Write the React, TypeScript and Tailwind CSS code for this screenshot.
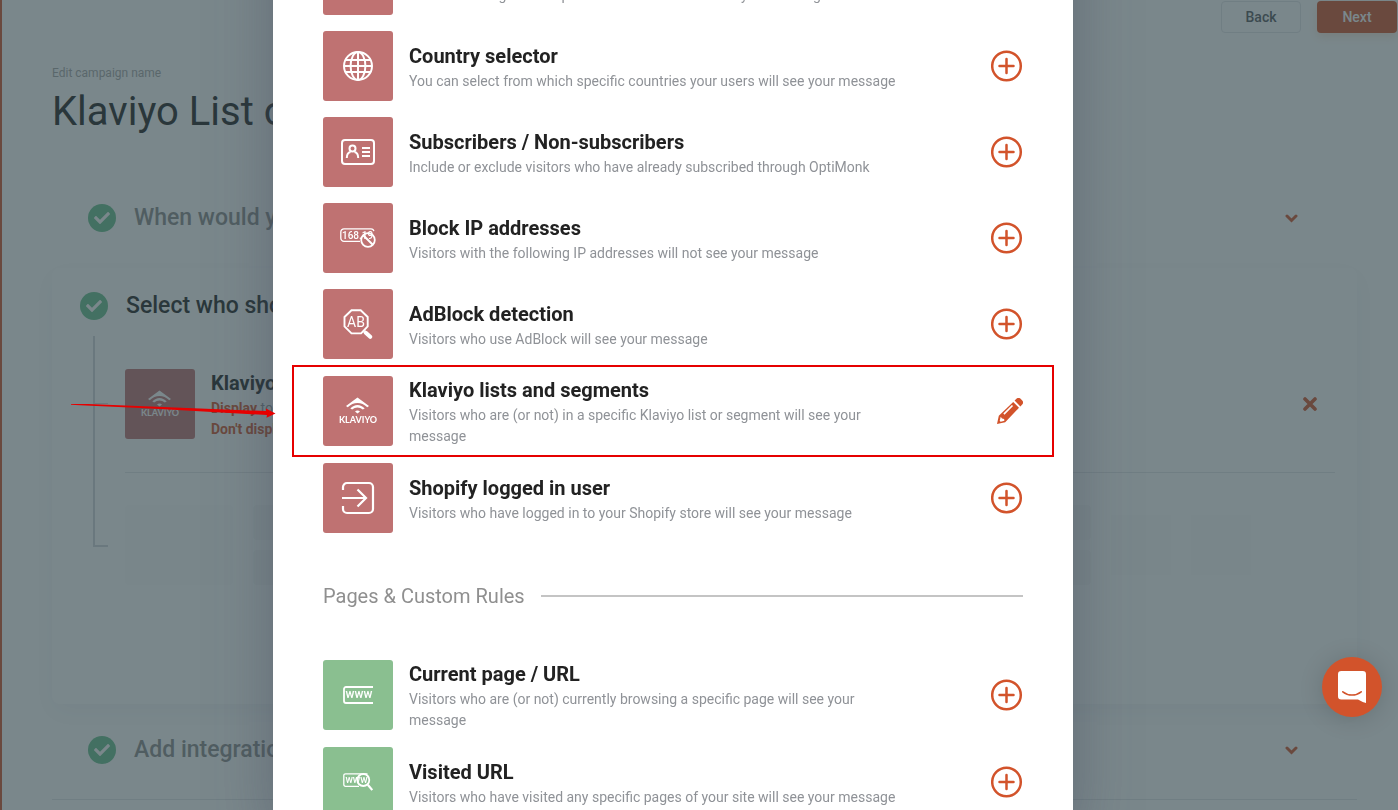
import React from 'react';
import { FaCheck } from 'react-icons/fa';

interface Rule {
  title: string;
  description: string;
  icon: React.ReactNode;
  active?: boolean;
}

const GlobeIcon = () => (
  <svg width="30" height="30" viewBox="0 0 30 30" fill="none" stroke="currentColor" strokeWidth="2">
    <circle cx="15" cy="15" r="14" />
    <ellipse cx="15" cy="15" rx="7.4" ry="14" />
    <path d="M15 1v28M2.4 9h25.2M1.2 15h27.6M2.4 21h25.2" />
  </svg>
);

const IdCardIcon = () => (
  <svg width="34" height="26" viewBox="0 0 34 26" fill="none" stroke="currentColor" strokeWidth="2">
    <rect x="1" y="1" width="32" height="24" rx="3" />
    <circle cx="11.5" cy="9.6" r="3" />
    <path d="M5.8 19c0-3.8 2-5.6 3.7-6M17.2 19c0-3.8-2-5.6-3.7-6" />
    <path d="M21 9h8M21 13h8M21 17h8" />
  </svg>
);

const BlockIpIcon = () => (
  <svg width="36" height="22" viewBox="0 0 36 22" fill="none" stroke="currentColor" strokeWidth="1.3">
    <path d="M20 14.3H4A3.2 3.2 0 0 1 .8 11V5A3.2 3.2 0 0 1 4 1.8h27c1.6 0 2.6.8 2.9 2.4" />
    <text x="2" y="11.6" fontSize="10" fontFamily="Roboto, sans-serif" fontWeight="500" fill="currentColor" stroke="none">168.19</text>
    <circle cx="28" cy="13" r="6.8" strokeWidth="1.8" />
    <path d="m23.2 8.2 9.6 9.6" strokeWidth="2" />
  </svg>
);

const AdBlockIcon = () => (
  <svg width="30" height="30" viewBox="0 0 30 30" fill="none" stroke="currentColor" strokeWidth="1.9">
    <path d="M8.5 1.2h9.2l7 6.8v9.4l-6.6 7H8.5L1.5 17.4V8z" />
    <text x="13" y="18" textAnchor="middle" fontSize="14" fontFamily="Roboto, sans-serif" fontWeight="400" fill="currentColor" stroke="none">AB</text>
    <path d="m21.3 22.3 1.2 1.2" strokeWidth="3" />
    <path d="m22.8 23.8 4.4 4" strokeWidth="4" strokeLinecap="round" />
  </svg>
);

const KlaviyoIcon = () => (
  <svg width="38" height="28" viewBox="0 0 38 28" fill="currentColor">
    <path d="M7 9 18.5.6 30 9l-1.7 1.3C22.5 4.6 14.5 4.6 8.7 10.3z" />
    <path d="M11.3 11.4c4.2-4.7 10.200-4.700 14.400 0l-1.900 1.200c-3.200-2.700-7.400-2.700-10.600 0z" />
    <path d="M16 14.600c1.500-1.400 3.500-1.400 5 0l-2.500 1.900z" />
    <text x="19" y="26" textAnchor="middle" fontSize="9" fontFamily="Lato, sans-serif" fontWeight="700">KLAVIYO</text>
  </svg>
);

const LoginIcon = () => (
  <svg width="34" height="34" viewBox="0 0 34 34" fill="none" stroke="currentColor" strokeWidth="2.2">
    <path d="M2 9V6a4 4 0 0 1 4-4h22a4 4 0 0 1 4 4v22a4 4 0 0 1-4 4H6a4 4 0 0 1-4-4v-3" />
    <path d="M1 17h24M16.5 8.500 25 17l-8.500 8.500" />
  </svg>
);

const WwwIcon = () => (
  <svg width="30" height="18" viewBox="0 0 30 18" fill="none" stroke="currentColor" strokeWidth="1.8">
    <path d="M30 1H3a2 2 0 0 0-2 2v12a2 2 0 0 0 2 2h27" />
    <text x="2.6" y="12.4" fontSize="12" fontFamily="Roboto, sans-serif" fontWeight="500" fill="currentColor" stroke="none">www</text>
  </svg>
);

const WwwSearchIcon = () => (
  <svg width="30" height="18" viewBox="0 0 30 18" fill="none" stroke="currentColor" strokeWidth="1.3">
    <path d="M16 13.3H2.5A1.7 1.7 0 0 1 .8 11.6V2.500A1.700 1.700 0 0 1 2.500.8h22" />
    <text x="2.4" y="10.2" fontSize="10" fontFamily="Roboto, sans-serif" fontWeight="500" fill="currentColor" stroke="none">www</text>
    <circle cx="20.3" cy="7" r="6" strokeWidth="1.8" />
    <path d="m24.8 11.8 4.5 5.2" strokeWidth="2.2" />
  </svg>
);

const PlusCircleIcon = () => (
  <svg width="32" height="32" viewBox="0 0 32 32" fill="none" stroke="currentColor" strokeWidth="2.5">
    <circle cx="15.5" cy="16" r="14.3" />
    <path d="M15.5 9v14M8.5 16h14" strokeLinecap="round" />
  </svg>
);

const PencilIcon = () => (
  <svg width="26" height="26" viewBox="0 0 26 26" fill="currentColor">
    <path d="M17.6 2.6 19.2 1a3.3 3.3 0 0 1 4.6 0l1.2 1.2a3.3 3.3 0 0 1 0 4.6l-1.6 1.6z" />
    <path fillRule="evenodd" d="m16.2 4 5.800 5.800L8.200 24.200 0 26l1.800-8.200zm-1.300 2.900L6.300 15.500l1.200 1.200 8.600-8.600zM3.700 18.800l-1 4.100 1 .9 3.700-1-.3-1.900-2.100-.3z" />
  </svg>
);

const ChevronIcon = () => (
  <svg width="13" height="9" viewBox="0 0 13 9" fill="none" stroke="currentColor" strokeWidth="3" strokeLinecap="round">
    <path d="m2 2 4.500 4.500L11 2" />
  </svg>
);

const CrossIcon = () => (
  <svg width="14" height="14" viewBox="0 0 14 14" fill="none" stroke="currentColor" strokeWidth="3.6" strokeLinecap="round">
    <path d="m2 2 10 10M12 2 2 12" />
  </svg>
);

const ChatIcon = () => (
  <svg width="28" height="32" viewBox="0 0 28 32">
    <path fill="#fff" d="M3.3 0h21.4A3.3 3.3 0 0 1 28 3.300V32s-4.100-1-8-3.500H3.300A3.300 3.300 0 0 1 0 25.200V3.300A3.300 3.300 0 0 1 3.300 0z" />
    <path d="M4.800 20.800c5.500 4.300 12.900 4.300 18.400 0" fill="none" stroke="#d2532b" strokeWidth="1.6" strokeLinecap="round" />
  </svg>
);

const visitorRules: Rule[] = [
  { title: 'Source', description: 'Visitors coming from a specific traffic source will see your message', icon: null },
  { title: 'Country selector', description: 'You can select from which specific countries your users will see your message', icon: <GlobeIcon /> },
  { title: 'Subscribers / Non-subscribers', description: 'Include or exclude visitors who have already subscribed through OptiMonk', icon: <IdCardIcon /> },
  { title: 'Block IP addresses', description: 'Visitors with the following IP addresses will not see your message', icon: <BlockIpIcon /> },
  { title: 'AdBlock detection', description: 'Visitors who use AdBlock will see your message', icon: <AdBlockIcon /> },
  { title: 'Klaviyo lists and segments', description: 'Visitors who are (or not) in a specific Klaviyo list or segment will see your message', icon: <KlaviyoIcon />, active: true },
  { title: 'Shopify logged in user', description: 'Visitors who have logged in to your Shopify store will see your message', icon: <LoginIcon /> },
];

const pageRules: Rule[] = [
  { title: 'Current page / URL', description: 'Visitors who are (or not) currently browsing a specific page will see your message', icon: <WwwIcon /> },
  { title: 'Visited URL', description: 'Visitors who have visited any specific pages of your site will see your message', icon: <WwwSearchIcon /> },
];

const Highlight = () => (
  <>
    <div className="pointer-events-none absolute -inset-x-[31px] -inset-y-[10px] border-2 border-[#e60000]" />
    <svg className="pointer-events-none absolute top-6 -left-[252px]" width="205" height="20" viewBox="0 0 205 20" fill="#e60000">
      <path d="M0 4.900h17l178 7.200V9.500l9.500 4.900-9 4.400.5-2.800L80 9.600 9 6.300 0 5.800z" />
    </svg>
  </>
);

const RuleRow: React.FC<{ rule: Rule; color: string }> = ({ rule, color }) => (
  <li className="relative flex items-center">
    <div className={`flex h-[70px] w-[70px] shrink-0 items-center justify-center rounded-[3px] text-white ${color}`}>
      {rule.icon}
    </div>
    <div className="ml-4 max-w-[490px] flex-1">
      <h3 className="text-xl leading-[30px] font-bold text-[#222]">{rule.title}</h3>
      <p className="text-sm leading-[21px] text-[#8f9297]">{rule.description}</p>
    </div>
    <button type="button" aria-label={`${rule.active ? 'Edit' : 'Add'} ${rule.title}`} className="ml-auto text-[#d2532b]">
      {rule.active ? <PencilIcon /> : <PlusCircleIcon />}
    </button>
    {rule.active && <Highlight />}
  </li>
);

const RulesModal = () => (
  <div className="fixed inset-0 flex justify-center overflow-hidden bg-[rgba(47,67,73,0.64)] pr-[52px]">
    <div role="dialog" aria-label="Targeting rules" className="-mt-[79px] h-fit w-[800px] max-w-full bg-white px-[50px] py-6 shadow-[0_0_60px_rgba(60,66,84,0.4)]">
      <ul className="flex flex-col gap-4">
        {visitorRules.map(rule => (
          <RuleRow key={rule.title} rule={rule} color="bg-[#bf7272]" />
        ))}
      </ul>
      <div className="my-[51px] flex items-center gap-4">
        <h2 className="text-xl leading-6 text-[#8f8f8f]">Pages &amp; Custom Rules</h2>
        <div className="h-0.5 flex-1 bg-[#c4c4c4]" />
      </div>
      <ul className="flex flex-col gap-4">
        {pageRules.map(rule => (
          <RuleRow key={rule.title} rule={rule} color="bg-[#8abf90]" />
        ))}
      </ul>
    </div>
  </div>
);

const CheckBadge = () => (
  <span className="flex h-7 w-7 shrink-0 items-center justify-center rounded-full bg-[#67bf8d] text-white">
    <FaCheck className="h-4 w-4" />
  </span>
);

const CollapsedStep: React.FC<{ title: string }> = ({ title }) => (
  <button type="button" className="flex w-full items-center pr-[59px] pl-9 text-left">
    <CheckBadge />
    <span className="ml-[18px] text-[23px] font-medium text-[#8c8c8c]">{title}</span>
    <span className="ml-auto text-[#d2532b]">
      <ChevronIcon />
    </span>
  </button>
);

const CampaignPage = () => (
  <div className="min-h-screen border-l-2 border-[#d2532b] bg-white pt-px">
    <div className="flex justify-end gap-4 pr-px text-sm font-medium">
      <button type="button" className="h-8 w-20 rounded border border-[#e3e5e8] text-[#55585c]">Back</button>
      <button type="button" className="h-8 w-20 rounded bg-[#d2532b] text-white shadow-[0_4px_10px_rgba(210,120,60,0.2)]">Next</button>
    </div>

    <main className="mt-8 pr-[41px] pl-[50px]">
      <p className="text-xs leading-4 text-[#a6a6a6]">Edit campaign name</p>
      <h1 className="mt-[7px] text-[40px] leading-[48px] text-[#222]">Klaviyo List or Segment</h1>

      <div className="mt-8 flex h-[100px]">
        <CollapsedStep title="When would you like the popup to appear?" />
      </div>

      <section className="rounded-lg pt-6 pr-[22px] pb-[119px] pl-[41px] shadow-[0_8px_24px_rgba(30,50,80,0.06)]">
        <div className="-ml-[13px] flex items-center">
          <CheckBadge />
          <h2 className="ml-[18px] text-[23px] leading-7 font-medium text-[#222]">Select who should see the popup</h2>
        </div>
        <div className="mt-4 flex">
          <div className="h-[211px] w-[15px] border-b-2 border-l-2 border-[#d3d6da] pt-[67px]">
            <div className="h-px bg-[#d3d6da]" />
          </div>
          <div className="mt-[33px] ml-[17px] flex-1">
            <div className="border-b border-[#e3e5e8] pb-[33px]">
              <div className="flex h-[70px] items-center">
                <div className="flex h-[70px] w-[70px] items-center justify-center rounded-[3px] bg-[#bf7272] text-white">
                  <KlaviyoIcon />
                </div>
                <div className="ml-4 text-sm leading-[21px] text-[#8f9297]">
                  <h3 className="text-xl leading-[30px] font-bold text-[#222]">Klaviyo lists and segments</h3>
                  <p><b className="text-[#d2532b]">Display</b> to visitors in the list</p>
                  <p><b className="text-[#d2532b]">Don't display</b> to visitors in the segment</p>
                </div>
                <button type="button" aria-label="Remove rule" className="mr-[18px] ml-auto text-[#d2532b]">
                  <CrossIcon />
                </button>
              </div>
            </div>
            <div className="mt-8 mr-[84px] flex h-20 items-center gap-5">
              <div className="h-full w-[108px] rounded bg-[#fcfcfc]" />
              <div className="flex h-full flex-1 flex-col gap-2.5">
                <div className="flex-1 rounded bg-[#f8f8f9]" />
                <div className="flex-1 rounded bg-[#f8f8f9]" />
              </div>
              <div className="h-[60px] w-[60px] bg-[#fcfcfc]" />
              <div className="h-[60px] w-[60px] bg-[#fcfcfc]" />
            </div>
          </div>
        </div>
      </section>

      <div className="border-b border-[#e3e5e8] pb-[3px]">
        <div className="flex h-[92px]">
          <CollapsedStep title="Add integrations" />
        </div>
      </div>
    </main>
  </div>
);

const App = () => (
  <div className="overflow-hidden font-[Roboto,sans-serif]">
    <CampaignPage />
    <RulesModal />
    <button
      type="button"
      aria-label="Open chat"
      className="fixed right-4 bottom-[93px] flex h-[60px] w-[60px] items-center justify-center rounded-full bg-[#d2532b] shadow-[0_2px_24px_rgba(0,0,0,0.15)]"
    >
      <ChatIcon />
    </button>
  </div>
);

export default App;
